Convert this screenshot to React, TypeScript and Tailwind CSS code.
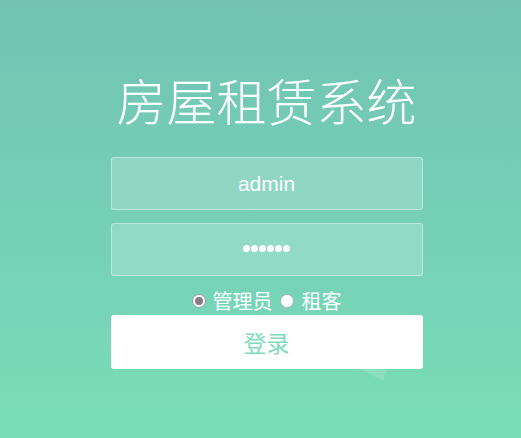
import React from "react";

export default function App() {
  const cjk = { fontFamily: '"Microsoft YaHei", "Noto Sans CJK SC", sans-serif' };
  return (
    <div className="relative w-[521px] h-[438px] overflow-hidden bg-gradient-to-b from-[#72c3b3] to-[#79ddb8]" style={cjk}>
      <div className="absolute left-[360px] top-[369px] w-[26px] h-[12px] bg-white/15 [clip-path:polygon(0_0,100%_0,90%_100%)]" />
      <div className="relative flex flex-col items-center pt-[67px] pl-[12px]">
        <h1 className="text-[50px] leading-[64px] font-light text-white">房屋租赁系统</h1>
        <div className="mt-[26px] w-[312px] flex flex-col gap-[13px]">
          <div className="h-[53px] rounded-[3px] border border-white/40 bg-white/20 flex items-center justify-center text-white text-[21px]" style={{ fontFamily: '"Liberation Sans", Arial, sans-serif' }}>
            admin
          </div>
          <div className="h-[53px] rounded-[3px] border border-white/40 bg-white/20 flex items-center justify-center text-white">
            <div className="flex gap-[1px] mt-[-2px]">
              {[0, 1, 2, 3, 4, 5].map((i) => (
                <span key={i} className="w-[7px] h-[7px] rounded-full bg-white" />
              ))}
            </div>
          </div>
        </div>
        <div className="mt-[14px] h-[22px] flex items-center text-white text-[20px] leading-[22px]">
          <span className="shrink-0 w-[14px] h-[14px] rounded-full bg-white border border-[#9a9a9a] flex items-center justify-center mr-[7px]">
            <span className="w-[8px] h-[8px] rounded-full bg-[#8a7a82]" />
          </span>
          <span>管理员</span>
          <span className="shrink-0 w-[14px] h-[14px] rounded-full bg-white border border-[#b0b0b0] ml-[7px] mr-[8px]" />
          <span>租客</span>
        </div>
        <button className="mt-[3px] w-[312px] h-[54px] rounded-[3px] bg-white text-[#7fdcba] text-[23px] flex items-center justify-center" style={cjk}>
          登录
        </button>
      </div>
    </div>
  );
}
